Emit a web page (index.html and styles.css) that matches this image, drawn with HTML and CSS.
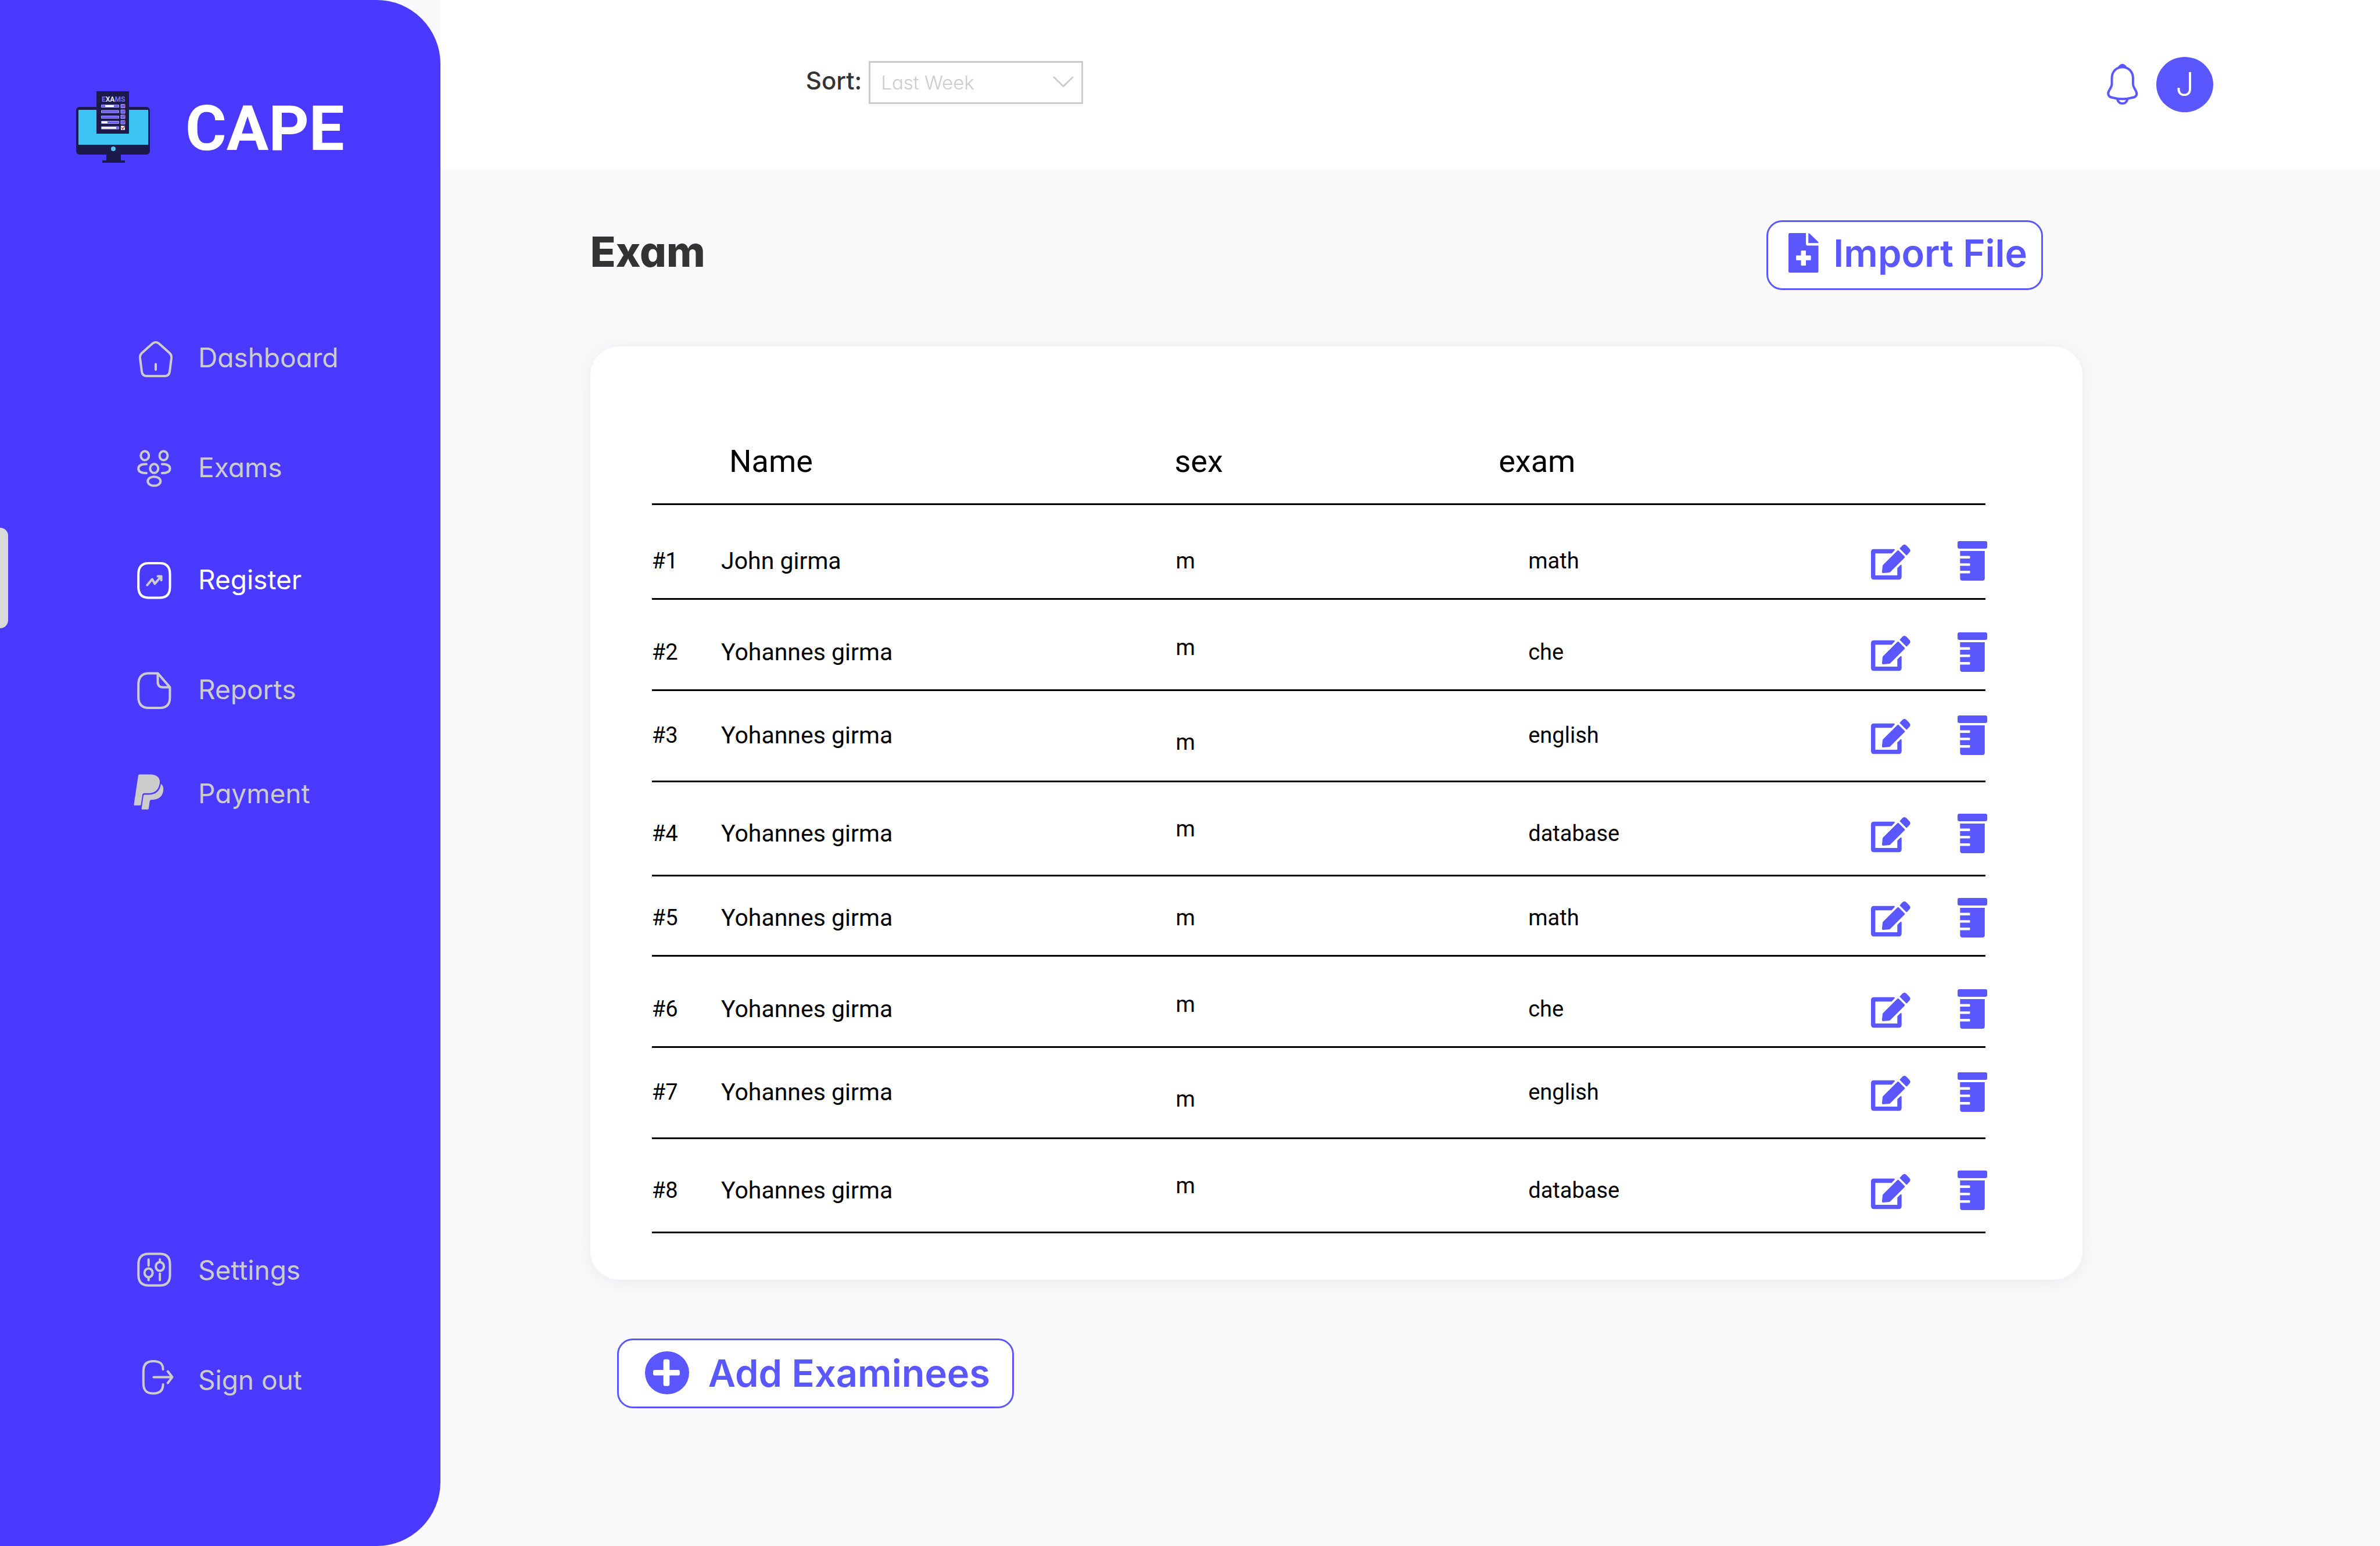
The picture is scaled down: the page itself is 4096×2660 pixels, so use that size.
FILE: index.html
```html
<!DOCTYPE html>
<html lang="en">
<head>
<meta charset="utf-8">
<title>CAPE - Exam</title>
<link rel="stylesheet" href="styles.css">
</head>
<body>
<svg class="sprite" aria-hidden="true">
  <symbol id="edit" viewBox="0 0 68 61">
    <path d="M5 7.7H39.5Q42 8.2 40 10.5L35.5 15.2H7.4V53H45.3V40.5L50.5 35.3Q52.7 34 52.7 36.5V55.2Q52.7 60.2 47.7 60.2H5Q0 60.2 0 55.2V12.7Q0 7.7 5 7.7Z"/>
    <path d="M45.6 10.2Q46.6 9.2 47.6 10.2L57.9 20.4Q58.9 21.4 57.9 22.4L33 47.2Q32.4 47.8 31.5 47.9L21.2 49.1Q18.7 49.2 18.9 46.8L20 36.4Q20.1 35.7 20.7 35Z"/>
    <path d="M49.9 7.4Q49.2 6.6 49.9 5.9L54.2 1.5Q57.4-1.3 60.9 1.5L66 6.8Q69.2 10.3 66.2 13.4L62 18Q61.2 18.8 60.4 18Z"/>
  </symbol>
  <symbol id="remove" viewBox="0 0 51 68">
    <rect width="51" height="13" rx="3"/>
    <path d="M4.3 17H46.8V64Q46.8 68 42.8 68H8.3Q4.3 68 4.3 64V55.4H20.5Q21.5 55.4 21.5 54.4V52Q21.5 51 20.5 51H4.3V42.6H20.5Q21.5 42.6 21.5 41.6V39.3Q21.5 38.3 20.5 38.3H4.3V29.9H20.5Q21.5 29.9 21.5 28.9V26.4Q21.5 25.4 20.5 25.4H4.3Z"/>
  </symbol>
</svg>
<div class="app">
  <aside class="sidebar">
    <div class="brand">
      <svg class="brand-logo" viewBox="0 0 128 128" aria-hidden="true">
        <rect y="27" width="127" height="82" rx="6" fill="#1b1a4b"/>
        <rect x="4" y="32" width="120" height="60" fill="#3dc3f2"/>
        <circle cx="64" cy="99" r="4" fill="#5cc4f0"/>
        <path d="M52 108H77V119H84V123H45V119H52Z" fill="#1b1a4b"/>
        <rect x="35" width="56" height="73" fill="#1b1a4b"/>
        <text x="44" y="18" class="logo-word"><tspan fill="#7a6ef5">E</tspan><tspan fill="#e8e6ff">XA</tspan><tspan fill="#7a6ef5">MS</tspan></text>
        <g fill="#6a5cff" stroke="#a9a2ee" stroke-width="1">
          <path d="M43.500 23.500h30v4h-30zM43.500 33h30v4h-30zM43.500 42.500h30v4h-30zM43.500 51.500h30v4h-30zM43.500 61h30v4h-30z"/>
          <path d="M77 22.500h7v6h-7zM77 32h7v6h-7zM77 41h7v6h-7zM77 50.500h7v6h-7z"/>
        </g>
        <path d="M50 24h15v3H50zM44 52h10v3H44zM44 61.500h25v3H44zM77 59.500h7v7h-7z" fill="#fff"/>
        <path d="M78 62l2 3 4-5M82 26l2-3M82 35l2-3M82 44l2-3M82 54l2-3" fill="none" stroke="#b8405e" stroke-width="1.500"/>
      </svg>
      <span class="brand-name">CAPE</span>
    </div>
    <nav class="menu menu-main" aria-label="Main">
      <a class="menu-link" href="#dashboard">
        <svg class="menu-icon" viewBox="0 0 80 80" aria-hidden="true"><path d="M36.500 16Q42 11.500 47.500 16L66 32.500Q69.500 36 69 41L66 64.500Q65 72 57 72H27Q19 72 18 64.500L15 41Q14.500 36 18 32.500ZM42 51.500V61"/></svg>
        Dashboard</a>
      <a class="menu-link" href="#exams">
        <svg class="menu-icon" viewBox="0 0 80 80" aria-hidden="true"><ellipse cx="23.300" cy="20" rx="7" ry="7.800"/><ellipse cx="55.500" cy="20" rx="7" ry="7.800"/><ellipse cx="39.300" cy="42" rx="7" ry="7.800"/><ellipse cx="39.300" cy="64" rx="11" ry="7.800"/><path d="M26 34.500Q12.200 34.500 12.200 42.200T26 50M52.800 34.500Q66.500 34.500 66.500 42.200T52.800 50"/></svg>
        Exams</a>
      <a class="menu-link is-active" href="#register" aria-current="page">
        <svg class="menu-icon" viewBox="0 0 80 80" aria-hidden="true"><path d="M30 12H49Q66.500 12 66.500 31V53Q66.500 71.500 49 71.500H30Q12.200 71.500 12.200 53V31Q12.200 12 30 12Z"/><path class="menu-icon-detail" d="M27.300 49.700L35.900 39.500 40.400 47.400 51.200 34.800M45.600 34.400H51.600V41.200"/></svg>
        Register</a>
      <a class="menu-link" href="#reports">
        <svg class="menu-icon" viewBox="0 0 80 80" aria-hidden="true"><path d="M45.500 12.400H30Q12.200 12.400 12.200 32V53Q12.200 72 30 72H49Q66.400 72 66.400 54V36.400ZM45.500 12.400V27Q45.500 36.400 54 36.400H66.400"/></svg>
        Reports</a>
      <a class="menu-link" href="#payment">
        <svg class="menu-icon menu-icon-solid" viewBox="0 0 80 80" aria-hidden="true"><path d="M14 7.500H33Q49 8 49 21Q47 39.500 30 39.800H22.500Q19.500 39.800 19 43L16.500 59.500Q16.300 60.800 15 60.800H5.500Q4.200 60.800 4.400 59.500L12 9Q12.300 7.500 14 7.500Z"/><path d="M51 23.800Q55.300 27 55.300 33Q54 50 37 51H34.500Q32 51 31.700 53.500L29.800 66.500Q29.600 67.800 28 67.800H18.600Q17.400 67.800 17.600 66.400L20.800 44.500Q21.200 42.300 23.500 42.300H30Q48.500 42 51 23.800Z"/></svg>
        Payment</a>
    </nav>
    <nav class="menu menu-foot" aria-label="Account">
      <a class="menu-link" href="#settings">
        <svg class="menu-icon" viewBox="0 0 80 80" aria-hidden="true"><path d="M30 12.300H49Q66.500 12.300 66.500 30V49Q66.500 66.700 49 66.700H30Q12.300 66.700 12.300 49V30Q12.300 12.300 30 12.300ZM29.700 22V32.500M29.700 53V57.500M49.100 22V26M49.100 46.500V57.500"/><ellipse cx="29.700" cy="45" rx="7" ry="7.500"/><ellipse cx="49.100" cy="34" rx="7" ry="7.500"/></svg>
        Settings</a>
      <a class="menu-link" href="#signout">
        <svg class="menu-icon" viewBox="0 0 80 80" aria-hidden="true"><path d="M54.600 22.300C54.600 12 49 8 37.500 8S20.800 14 20.800 25V46C20.800 58 26 63.500 37.500 63.500S54.600 58 54.600 48M38.400 35.400H70M62.800 25.500L70.500 35.400 62.800 45.500"/></svg>
        Sign out</a>
    </nav>
  </aside>

  <div class="page">
    <header class="topbar">
      <div class="sort">
        <label class="sort-label" for="sort">Sort:</label>
        <span class="sort-box">
          <select class="sort-select" id="sort"><option>Last Week</option></select>
          <svg class="sort-arrow" viewBox="0 0 36 20" aria-hidden="true"><path d="M2 2L18 17.500 34 2"/></svg>
        </span>
      </div>
      <div class="account">
        <button class="bell" type="button" aria-label="Notifications">
          <svg class="bell-icon" viewBox="0 0 54 70" aria-hidden="true"><path d="M8.500 24.500C8.500 13 16.500 5.400 26.700 5.400S44.900 13 44.900 24.500V34C45 42 51.200 45 51.200 51Q51.200 56 46 57.500Q26.700 63 7.500 57.500Q2.200 56 2.200 50.500C2.200 45 8.500 42 8.500 34ZM18 61Q20 68 26.700 68T35.400 61"/><path class="bell-cap" d="M19 5.500Q22 0 26.700 0T34.400 5.500L30 7H23Z"/></svg>
        </button>
        <button class="avatar" type="button">J</button>
      </div>
    </header>

    <main class="content">
      <div class="heading">
        <h1 class="title">Exam</h1>
        <button class="action action-import" type="button">
          <svg class="file-icon" viewBox="0 0 52 68" aria-hidden="true"><path d="M2 0H30V18Q30 21.500 33 21.500H51.500V66Q51.500 68 49.500 68H2Q0 68 0 66V2Q0 0 2 0ZM22.500 30Q21.500 30 21.500 31V38.400H14Q13 38.400 13 39.400V45.800Q13 46.800 14 46.800H21.500V55Q21.500 56 22.500 56H29Q30 56 30 55V46.800H37.600Q38.600 46.800 38.600 45.800V39.400Q38.600 38.400 37.600 38.400H30V31Q30 30 29 30Z"/><path d="M34.200 .5Q36 0 37 1.500L50.500 14.500Q51.500 15.500 51.500 17.200H34.200Z"/></svg>
          Import File
        </button>
      </div>

      <section class="card">
        <table class="examinees">
          <colgroup><col class="col-no"><col class="col-name"><col class="col-sex"><col class="col-exam"><col class="col-edit"><col class="col-remove"></colgroup>
          <thead>
            <tr><th></th><th class="head-name">Name</th><th>sex</th><th>exam</th><th></th><th></th></tr>
          </thead>
          <tbody>
            <tr><td>#1</td><td class="name">John girma</td><td class="sex">m</td><td class="exam">math</td><td class="tool"><button class="icon-button" type="button" aria-label="Edit"><svg class="edit-icon"><use href="#edit"/></svg></button></td><td class="tool"><button class="icon-button" type="button" aria-label="Delete"><svg class="remove-icon"><use href="#remove"/></svg></button></td></tr>
            <tr><td>#2</td><td class="name">Yohannes girma</td><td class="sex">m</td><td class="exam">che</td><td class="tool"><button class="icon-button" type="button" aria-label="Edit"><svg class="edit-icon"><use href="#edit"/></svg></button></td><td class="tool"><button class="icon-button" type="button" aria-label="Delete"><svg class="remove-icon"><use href="#remove"/></svg></button></td></tr>
            <tr><td>#3</td><td class="name">Yohannes girma</td><td class="sex">m</td><td class="exam">english</td><td class="tool"><button class="icon-button" type="button" aria-label="Edit"><svg class="edit-icon"><use href="#edit"/></svg></button></td><td class="tool"><button class="icon-button" type="button" aria-label="Delete"><svg class="remove-icon"><use href="#remove"/></svg></button></td></tr>
            <tr><td>#4</td><td class="name">Yohannes girma</td><td class="sex">m</td><td class="exam">database</td><td class="tool"><button class="icon-button" type="button" aria-label="Edit"><svg class="edit-icon"><use href="#edit"/></svg></button></td><td class="tool"><button class="icon-button" type="button" aria-label="Delete"><svg class="remove-icon"><use href="#remove"/></svg></button></td></tr>
            <tr class="compact"><td>#5</td><td class="name">Yohannes girma</td><td class="sex">m</td><td class="exam">math</td><td class="tool"><button class="icon-button" type="button" aria-label="Edit"><svg class="edit-icon"><use href="#edit"/></svg></button></td><td class="tool"><button class="icon-button" type="button" aria-label="Delete"><svg class="remove-icon"><use href="#remove"/></svg></button></td></tr>
            <tr><td>#6</td><td class="name">Yohannes girma</td><td class="sex">m</td><td class="exam">che</td><td class="tool"><button class="icon-button" type="button" aria-label="Edit"><svg class="edit-icon"><use href="#edit"/></svg></button></td><td class="tool"><button class="icon-button" type="button" aria-label="Delete"><svg class="remove-icon"><use href="#remove"/></svg></button></td></tr>
            <tr><td>#7</td><td class="name">Yohannes girma</td><td class="sex">m</td><td class="exam">english</td><td class="tool"><button class="icon-button" type="button" aria-label="Edit"><svg class="edit-icon"><use href="#edit"/></svg></button></td><td class="tool"><button class="icon-button" type="button" aria-label="Delete"><svg class="remove-icon"><use href="#remove"/></svg></button></td></tr>
            <tr><td>#8</td><td class="name">Yohannes girma</td><td class="sex">m</td><td class="exam">database</td><td class="tool"><button class="icon-button" type="button" aria-label="Edit"><svg class="edit-icon"><use href="#edit"/></svg></button></td><td class="tool"><button class="icon-button" type="button" aria-label="Delete"><svg class="remove-icon"><use href="#remove"/></svg></button></td></tr>
          </tbody>
        </table>
      </section>

      <button class="action action-add" type="button">
        <svg class="plus-icon" viewBox="0 0 76 74" aria-hidden="true"><ellipse cx="38" cy="37" rx="38" ry="37"/><path class="plus-sign" d="M35 13.700H39Q42.300 13.700 42.300 17V32H57Q60 32 60 35V38.500Q60 41.600 57 41.600H42.300V56.500Q42.300 59.800 39 59.800H35Q31.700 59.800 31.700 56.500V41.600H17Q14 41.600 14 38.500V35Q14 32 17 32H31.700V17Q31.700 13.700 35 13.700Z"/></svg>
        Add Examinees
      </button>
    </main>
  </div>
</div>
</body>
</html>
```

FILE: styles.css
```css
* { box-sizing: border-box; }

:root {
  --brand: #4a3aff;
  --accent: #5a57ff;
  --muted: #cccccc;
  --ink: #333333;
  --ui: "Inter", "Open Sans", sans-serif;
  --data: "Roboto", "Liberation Sans", sans-serif;
}

body {
  margin: 0;
  background: #fafafc;
  font-family: var(--ui);
  font-feature-settings: "cv11";
}

button,
select {
  font: inherit;
  font-feature-settings: inherit;
  color: inherit;
}

button { padding: 0; border: 0; background: none; cursor: pointer; }
svg { display: block; flex: none; }
.sprite { position: absolute; width: 0; height: 0; }

.app { display: flex; min-height: 100vh; }

/* Sidebar */
.sidebar {
  display: flex;
  flex: none;
  flex-direction: column;
  width: 18.5%;
  padding: 157px 0 192px;
  border-radius: 0 110px 110px 0;
  background: var(--brand);
}

.brand {
  display: flex;
  align-items: center;
  gap: 60px;
  padding-left: 131px;
}

.brand-logo { width: 128px; height: 128px; }
.logo-word { font: 700 12px var(--data); }

.brand-name {
  color: #fff;
  font: 700 108px/128px var(--data);
}

.menu { display: grid; }
.menu-main { grid-template-rows: 189px 189px 197px 181px 177px; margin-top: 235px; }
.menu-foot { grid-template-rows: 189px 189px; margin-top: auto; }

.menu-link {
  position: relative;
  display: flex;
  align-items: center;
  gap: 35px;
  padding-left: 226px;
  color: var(--muted);
  font-size: 46px;
  line-height: 64px;
  text-decoration: none;
}

.menu-link.is-active { color: #fff; }

.menu-link.is-active::before {
  content: "";
  position: absolute;
  top: 10px;
  left: 0;
  width: 14px;
  height: 173px;
  border-radius: 0 14px 14px 0;
  background: #d9d9d9;
}

.menu-icon {
  width: 80px;
  height: 80px;
  fill: none;
  stroke: currentColor;
  stroke-width: 4;
  stroke-linecap: round;
  stroke-linejoin: round;
}

.menu-icon-solid { fill: currentColor; stroke: none; }
.menu-icon-detail { stroke: var(--muted); }

/* Top bar */
.page { flex: 1; min-width: 0; }

.topbar {
  display: flex;
  align-items: center;
  justify-content: space-between;
  height: 290px;
  padding: 0 287px 0 629px;
  background: #fff;
}

.sort {
  display: flex;
  align-items: baseline;
  gap: 12px;
  margin-bottom: 6px;
}

.sort-label { color: var(--ink); font-size: 42px; font-weight: 500; }
.sort-box { position: relative; }

.sort-select {
  width: 369px;
  height: 74px;
  padding: 0 60px 0 18px;
  border: 3px solid var(--muted);
  border-radius: 0;
  appearance: none;
  background: #fff;
  color: var(--muted);
  font-size: 33px;
  font-weight: 300;
}

.sort-arrow {
  position: absolute;
  top: 26px;
  right: 16px;
  width: 36px;
  height: 20px;
  fill: none;
  stroke: var(--muted);
  stroke-width: 3;
  stroke-linecap: round;
  stroke-linejoin: round;
  pointer-events: none;
}

.account { display: flex; align-items: center; gap: 31px; }
.bell-icon { width: 54px; height: 70px; fill: none; stroke: var(--accent); stroke-width: 4; }
.bell-cap { fill: var(--accent); stroke: none; }

.avatar {
  width: 98px;
  height: 95px;
  border-radius: 50%;
  background: var(--accent);
  color: #fff;
  font-size: 56px;
  font-weight: 300;
}

/* Content */
.content { padding: 89px 512px 0 258px; }

.heading {
  display: flex;
  align-items: center;
  justify-content: space-between;
  padding-right: 68px;
}

.title {
  margin: 0;
  padding-bottom: 12px;
  color: var(--ink);
  font-size: 72px;
  font-weight: 800;
  line-height: 88px;
}

.action {
  display: flex;
  align-items: center;
  height: 120px;
  border: 3px solid var(--accent);
  border-radius: 27px;
  background: #fff;
  color: var(--accent);
  fill: currentColor;
  font-feature-settings: normal;
  font-size: 65px;
  font-weight: 600;
  white-space: nowrap;
}

.action-import { gap: 25px; padding: 0 24px 8px 35px; }
.action-add { gap: 33px; margin: 101px 0 0 46px; padding: 0 38px 2px 45px; }
.file-icon { width: 52px; height: 68px; fill-rule: evenodd; }
.plus-icon { width: 76px; height: 74px; }
.plus-sign { fill: #fff; }

.card {
  margin-top: 97px;
  padding: 0 167px 80px 106px;
  border-radius: 50px;
  background: #fff;
  box-shadow: 0 3px 36px rgba(0, 0, 0, .07);
}

/* Examinee table */
.examinees {
  width: 100%;
  table-layout: fixed;
  border-spacing: 0;
  color: #000;
  font-family: var(--data);
}

.col-no { width: 5.2%; }
.col-name { width: 34%; }
.col-sex { width: 24.3%; }
.col-exam { width: 27.9%; }
.col-edit { width: 6.5%; }
.col-remove { width: 2.1%; }

.examinees th,
.examinees td {
  padding: 0 0 var(--foot);
  border-bottom: 3px solid #000;
  text-align: left;
  vertical-align: bottom;
  white-space: nowrap;
}

.examinees th { font-size: 54px; font-weight: 400; line-height: 64px; }
.examinees td { font-size: 38px; line-height: 48px; }
.examinees .head-name { padding-left: 14px; }
.examinees .name { font-size: 41px; }
.examinees .exam { padding-left: 51px; }
.examinees .sex { padding-bottom: var(--sex-foot); padding-left: 2px; }
.examinees .tool { padding-bottom: calc(var(--foot) - 10px); }

.examinees thead tr { --foot: 40px; height: 273px; }
.examinees tbody tr { --foot: 40px; --sex-foot: 40px; height: 157px; }
.examinees tbody tr:nth-child(4n + 1) { height: 163px; }
.examinees tbody tr:nth-child(4n + 2) { --sex-foot: 48px; }
.examinees tbody tr:nth-child(4n + 3) { --foot: 54px; --sex-foot: 42px; }
.examinees tbody tr:nth-child(4n + 4) { --foot: 47px; --sex-foot: 55px; height: 162px; }
.examinees tbody tr.compact { height: 138px; }

.icon-button { display: block; fill: var(--accent); }
.edit-icon { width: 68px; height: 61px; margin-bottom: 1px; }
.remove-icon { width: 51px; height: 68px; }
```
